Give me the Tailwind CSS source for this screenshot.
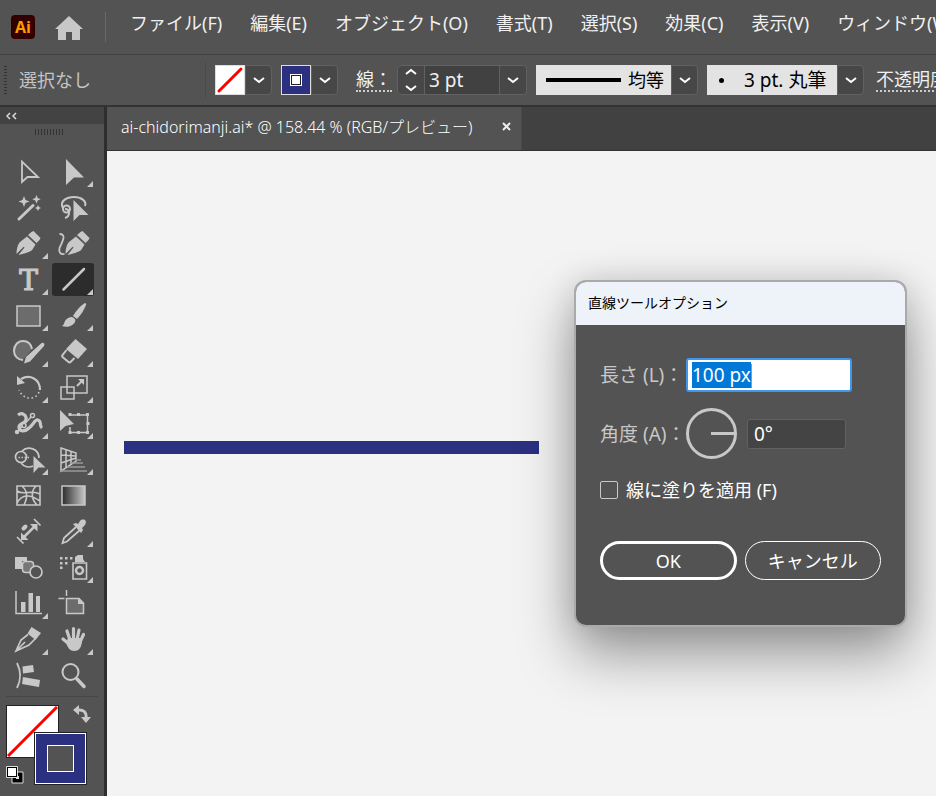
<!DOCTYPE html>
<html lang="ja">

<head>
    <meta charset="UTF-8">
    <meta name="viewport" content="width=device-width, initial-scale=1.0">
    <title>ai-chidorimanji.ai</title>
    <script src="https://cdn.jsdelivr.net/npm/@tailwindcss/browser@4"></script>
</head>

<body class="flex h-screen flex-col overflow-hidden bg-white pb-[3px] font-['Noto_Sans','Noto_Sans_CJK_JP',sans-serif] text-[18px] leading-6 text-[#f0f0f0]">

    <!-- Menu bar -->
    <header class="flex h-[55px] shrink-0 items-center overflow-hidden border-b border-[#404040] bg-[#535353] pl-[11px] whitespace-nowrap">
        <div class="flex h-6 w-6 shrink-0 items-center justify-center rounded bg-[#330000] font-['Open_Sans',sans-serif] text-[16px] font-bold text-[#ff9a00]">Ai</div>
        <button class="ml-5 shrink-0" aria-label="ホーム">
            <svg class="h-7 w-7 fill-[#c8c8c8]" viewBox="0 0 28 28">
                <path d="M14 3 28 16h-3v11h-8v-8h-6v8H3V16H0z" />
            </svg>
        </button>
        <div class="ml-[22px] h-[30px] w-px shrink-0 bg-[#6a6a6a]"></div>
        <nav class="ml-6 flex gap-7 pb-2">
            <a href="#">ファイル(F)</a>
            <a href="#">編集(E)</a>
            <a href="#">オブジェクト(O)</a>
            <a href="#">書式(T)</a>
            <a href="#">選択(S)</a>
            <a href="#">効果(C)</a>
            <a href="#">表示(V)</a>
            <a href="#">ウィンドウ(W)</a>
        </nav>
    </header>

    <!-- Control bar -->
    <section class="flex h-[52px] shrink-0 items-center overflow-hidden border-b-2 border-[#333] bg-[#535353] pl-1 whitespace-nowrap">
        <div class="h-7 w-[3px] shrink-0 bg-[repeating-linear-gradient(#333_0_1px,transparent_1px_3px)]"></div>
        <div class="ml-3 w-[186px] shrink-0 text-[#c4c4c4]">選択なし</div>
        <div class="h-9 w-px shrink-0 bg-[#4a4a4a]"></div>

        <div class="ml-[9px] flex h-[30px] shrink-0">
            <button class="w-[30px] border border-[#ddd] bg-white" aria-label="塗り">
                <svg class="h-7 w-7" viewBox="0 0 28 28">
                    <path d="M3 25 25 3" stroke="#f00" stroke-width="3" stroke-linecap="round" />
                </svg>
            </button>
            <button class="flex w-[27px] items-center justify-center rounded-r-sm border border-[#616161] bg-[#474747]" aria-label="塗りを選ぶ">
                <svg class="h-[7px] w-3" viewBox="0 0 12 7" fill="none" stroke="#fff" stroke-width="2"><path d="m1 1 5 4 5-4" /></svg>
            </button>
        </div>

        <div class="ml-[9px] flex h-[30px] shrink-0">
            <button class="flex w-[30px] items-center justify-center border border-[#ddd] bg-[#2b3080]" aria-label="線の色">
                <span class="flex h-3 w-3 items-center justify-center border border-white bg-[#222]"><span class="h-2 w-2 bg-white"></span></span>
            </button>
            <button class="flex w-[27px] items-center justify-center rounded-r-sm border border-[#616161] bg-[#474747]" aria-label="線の色を選ぶ">
                <svg class="h-[7px] w-3" viewBox="0 0 12 7" fill="none" stroke="#fff" stroke-width="2"><path d="m1 1 5 4 5-4" /></svg>
            </button>
        </div>

        <label for="stroke-width" class="ml-[18px] w-9 shrink-0 border-b-2 border-dotted border-[#ccc] leading-[22px]">線：</label>
        <div class="ml-[5px] flex h-[30px] shrink-0 rounded-sm border border-[#616161] bg-[#474747]">
            <button class="flex w-[27px] items-center justify-center border-r border-[#616161]" aria-label="増減">
                <svg class="h-6 w-3" viewBox="0 0 12 24" fill="none" stroke="#fff" stroke-width="2"><path d="m1 6 5-4 5 4M1 18l5 4 5-4" /></svg>
            </button>
            <input id="stroke-width" type="text" value="3 pt" class="w-[74px] bg-[#414141] pl-1 text-[19px]">
            <button class="flex w-[27px] items-center justify-center border-l border-[#616161]" aria-label="線幅を選ぶ">
                <svg class="h-[7px] w-3" viewBox="0 0 12 7" fill="none" stroke="#fff" stroke-width="2"><path d="m1 1 5 4 5-4" /></svg>
            </button>
        </div>

        <div class="ml-[9px] flex h-[30px] shrink-0">
            <div class="flex w-[135px] items-center bg-[#e3e3e3] pl-[10px] text-black">
                <div class="mr-[7px] h-1 w-[75px] bg-black"></div>
                <select class="w-9 appearance-none" aria-label="可変線幅プロファイル">
                    <option>均等</option>
                </select>
            </div>
            <button class="flex w-[27px] items-center justify-center rounded-r-sm border border-[#616161] bg-[#474747]" aria-label="プロファイルを選ぶ">
                <svg class="h-[7px] w-3" viewBox="0 0 12 7" fill="none" stroke="#fff" stroke-width="2"><path d="m1 1 5 4 5-4" /></svg>
            </button>
        </div>

        <div class="ml-[9px] flex h-[30px] shrink-0">
            <div class="flex w-[130px] items-center bg-[#e3e3e3] pl-3 text-black">
                <div class="mr-5 h-[5px] w-[5px] shrink-0 rounded-full bg-black"></div>
                <select class="w-[90px] appearance-none text-[19px]" aria-label="ブラシ定義">
                    <option>3 pt. 丸筆</option>
                </select>
            </div>
            <button class="flex w-[27px] items-center justify-center rounded-r-sm border border-[#616161] bg-[#474747]" aria-label="ブラシを選ぶ">
                <svg class="h-[7px] w-3" viewBox="0 0 12 7" fill="none" stroke="#fff" stroke-width="2"><path d="m1 1 5 4 5-4" /></svg>
            </button>
        </div>

        <a href="#" class="ml-3 shrink-0 border-b-2 border-dotted border-[#ccc] leading-[22px]">不透明度：</a>
    </section>

    <div class="flex min-h-0 flex-1">
        <!-- Tool panel -->
        <aside class="w-[107px] shrink-0 overflow-hidden border-r-[3px] border-[#2e2e2e] bg-[#535353]">
            <div class="flex h-[17px] items-center bg-[#434343] pl-[6px]">
                <button aria-label="パネルを折りたたむ">
                    <svg class="h-2 w-3" viewBox="0 0 12 8" fill="none" stroke="#ddd" stroke-width="1.5"><path d="M4 1 1 4l3 3M10 1 7 4l3 3" /></svg>
                </button>
            </div>
            <div class="mt-[5px] ml-[35px] h-[6px] w-[29px] bg-[repeating-linear-gradient(90deg,#333_0_1px,transparent_1px_3px)]"></div>

            <div class="mt-5 ml-[7px] grid w-[87px] grid-cols-2 gap-[3px] text-[#c8c8c8] [&_button]:h-[33px] [&_button]:w-[42px] [&_button]:rounded-[3px] [&_svg]:h-[33px] [&_svg]:w-[42px] [&_svg]:fill-current">
                <button aria-label="選択"><svg viewBox="0 0 42 33">
                    <path d="M15 6.500v20.500l5.500-5H31z" fill="none" stroke="currentColor" stroke-width="1.800" />
                </svg></button>
                <button aria-label="ダイレクト選択"><svg viewBox="0 0 42 33">
                    <path d="M14 4v26l8-7.500h10z" />
                    <path d="M41 26v6h-6z" />
                </svg></button>

                <button aria-label="自動選択"><svg viewBox="0 0 42 33">
                    <path d="M12 28 26 14.500" stroke="currentColor" stroke-width="3" stroke-linecap="round" />
                    <path d="m17 5 1.500 4 4 1.500-4 1.500-1.500 4-1.500-4-4-1.500 4-1.500zM29.500 4l1.200 3 3 1.200-3 1.200-1.200 3-1.200-3-3-1.200 3-1.200zM31 14l1 2 2 1-2 1-1 2-1-2-2-1 2-1z" />
                </svg></button>
                <button aria-label="なげなわ"><svg viewBox="0 0 42 33">
                    <g fill="none" stroke="currentColor" stroke-width="2">
                        <path d="M11 17C7 10 15 6 22 6s13 4 11 9" />
                        <circle cx="14.500" cy="18" r="3.500" />
                        <path d="M13 18c3 0 4 1 4 4s-1 4-4 5" />
                    </g>
                    <path d="M21.500 9v21l6-6h9z" />
                </svg></button>

                <button aria-label="ペン"><svg viewBox="0 0 42 33">
                    <path d="m24.500 5 2-1 7 7-1 2-3 3-8.500-8zM20 9.500l8.500 8-3 5c-1 2-8 4-14 5.500l6-7.500-.800-.800L9.500 27c0-5 1.500-10 3.500-12z" />
                    <path d="M41 26v6h-6z" />
                </svg></button>
                <button aria-label="曲線"><svg viewBox="0 0 42 33">
                    <path d="m28.500 5 2-1 7 7-1 2-3 3-8.500-8zM24 9.500l8.500 8-3 5c-1 2-8 4-14 5.500l6-7.500-.800-.800-7.200 7.300c0-5 1.500-10 3.500-12z" />
                    <path d="M7.500 7c8 0 2 9 0 14-1 4 1 7 5 6" fill="none" stroke="currentColor" stroke-width="1.800" />
                </svg></button>

                <button aria-label="文字"><svg viewBox="0 0 42 33">
                    <text x="21.500" y="27" text-anchor="middle" font-family="DejaVu Serif, serif" font-size="28" stroke="currentColor" stroke-width="1.200">T</text>
                    <path d="M41 26v6h-6z" />
                </svg></button>
                <button class="bg-[#2c2c2c]" aria-label="直線"><svg viewBox="0 0 42 33">
                    <path d="M11.500 26.500 32 6" stroke="currentColor" stroke-width="2.500" stroke-linecap="round" />
                    <path d="M41 26v6h-6z" />
                </svg></button>

                <button aria-label="長方形"><svg viewBox="0 0 42 33">
                    <path d="M10 7h23v20H10z" fill="#6c6c6c" stroke="currentColor" stroke-width="1.500" />
                    <path d="M41 26v6h-6z" />
                </svg></button>
                <button aria-label="ブラシ"><svg viewBox="0 0 42 33">
                    <path d="M33 4c1 0 1.500 1 1 2-2 5-5 10-9 14l-4-3c3-5 7-10 12-13zM20 18c3 1 4 3 3 5-2 4-8 6-13 4 2-1 2-3 3-5s4-4 7-4z" />
                    <path d="M41 26v6h-6z" />
                </svg></button>

                <button aria-label="Shaper"><svg viewBox="0 0 42 33">
                    <path d="M16 25c-5 0-9-4-9-9 0-6 4-10 9-10s8 3 9 8" fill="#6c6c6c" stroke="currentColor" stroke-width="2" />
                    <path d="m17 28.500 2-6.500L34 8.500c2-2 4.500.500 3 2.500L23 26.500z" />
                    <path d="M41 26v6h-6z" />
                </svg></button>
                <button aria-label="消しゴム"><svg viewBox="0 0 42 33">
                    <path d="M23.500 4 35 14l-9 10-12-10z" />
                    <path d="m14.500 15-4 5q-1 1 0 2l6 5q1 1 2 0l4-4" fill="none" stroke="currentColor" stroke-width="2" />
                    <path d="M41 26v6h-6z" />
                </svg></button>

                <button aria-label="回転"><svg viewBox="0 0 42 33">
                    <path d="M14 8c9-5 19 0 19 11" fill="none" stroke="currentColor" stroke-width="2.200" />
                    <path d="M32 21c-3 8-15 9-20-2" fill="none" stroke="currentColor" stroke-width="1.600" stroke-dasharray="1.600 2.600" />
                    <path d="M10 5v9l8-2z" />
                    <path d="M41 26v6h-6z" />
                </svg></button>
                <button aria-label="拡大・縮小"><svg viewBox="0 0 42 33">
                    <path d="M15 5h20v17H15zM9 16h13v12H9z" fill="none" stroke="currentColor" stroke-width="1.500" />
                    <path d="m25 15 5-5" stroke="currentColor" stroke-width="2" />
                    <path d="M26 8h6v6z" />
                    <path d="M41 26v6h-6z" />
                </svg></button>

                <button aria-label="線幅"><svg viewBox="0 0 42 33">
                    <path d="M11 8c4-3 9 0 8 5-1 4-7 3-7 7 0 5 6 5 10 1 5-4 6-9 9-8 4 1 1 6 4 8" fill="none" stroke="currentColor" stroke-width="3.200" />
                    <path d="M10 25 25 9" stroke="currentColor" stroke-width="1.500" />
                    <circle cx="10" cy="25" r="2.200" />
                    <circle cx="25.500" cy="8.500" r="2" fill="#535353" stroke="currentColor" stroke-width="1.500" />
                    <circle cx="17" cy="18.500" r="2" fill="#535353" stroke="currentColor" stroke-width="1.500" />
                    <path d="M41 26v6h-6z" />
                </svg></button>
                <button aria-label="自由変形"><svg viewBox="0 0 42 33">
                    <path d="M17 8h18.500v17.500H18V20" fill="none" stroke="currentColor" stroke-width="1.500" />
                    <path d="M8 3v21l5.500-5 8.500-2zM34 6h3v3h-3zM34 24h3v3h-3zM16.500 24h3v3h-3zM25 6h3v3h-3zM25 24h3v3h-3zM34.500 15h3v3h-3zM16.500 6h3v3h-3z" />
                    <path d="M41 26v6h-6z" />
                </svg></button>

                <button aria-label="シェイプ形成"><svg viewBox="0 0 42 33">
                    <g fill="none" stroke="currentColor" stroke-width="1.700">
                        <circle cx="14" cy="14" r="5.500" />
                        <path d="M15 8c6-6 17-2 17 7M14 20c3 4 8 5 12 3" />
                        <path d="M11.500 14.500h12" stroke-dasharray="1.500 1.500" />
                    </g>
                    <path d="M26.500 13v17l5-5.500h7z" />
                    <path d="M41 26v6h-6z" />
                </svg></button>
                <button aria-label="遠近グリッド"><svg viewBox="0 0 42 33">
                    <path d="m9 5 15 5v8L9 28zM14 7v18M19 8v13M9 12l15 1M9 20l15-5" fill="none" stroke="currentColor" stroke-width="1.500" />
                    <path d="M23 17h6M19 20h12M15 24h18M9 28h26" stroke="#999" stroke-width="1.300" />
                    <path d="M41 26v6h-6z" />
                </svg></button>

                <button aria-label="メッシュ"><svg viewBox="0 0 42 33">
                    <path d="M10 7h23v19H10zM15 7c7 6 5 13 2 19M29 7c-6 6-4 14 1 19M10 12c7 5 14-2 23 3M10 24c5-9 13-9 23-2" fill="none" stroke="currentColor" stroke-width="1.600" />
                </svg></button>
                <button aria-label="グラデーション"><svg viewBox="0 0 42 33">
                    <defs>
                        <linearGradient id="grad">
                            <stop offset="0" stop-color="#2a2a2a" />
                            <stop offset="1" stop-color="#c8c8c8" />
                        </linearGradient>
                    </defs>
                    <path d="M10 7h23v19H10z" fill="url(#grad)" stroke="currentColor" stroke-width="1.500" />
                </svg></button>

                <button aria-label="寸法"><svg viewBox="0 0 42 33">
                    <path d="m10 22 6.500 6.500M27 4l6.500 6.500" stroke="currentColor" stroke-width="1.700" />
                    <path d="m16 23 12-12" stroke="currentColor" stroke-width="2.500" />
                    <path d="M14 17.500V25h7.500zM23 9h7.500v7.500z" />
                    <path d="m16.500 13.500 2-2" stroke="currentColor" stroke-width="4" stroke-linecap="round" />
                </svg></button>
                <button aria-label="スポイト"><svg viewBox="0 0 42 33">
                    <path d="M24 12 12 23l-1.500 5L15 26.500 28 15" fill="none" stroke="currentColor" stroke-width="1.800" />
                    <path d="m21 9 3-1 2 1 2-3c3-3 8-1 5 4l-3 3 1 2-2 3z" />
                    <path d="M41 26v6h-6z" />
                </svg></button>

                <button aria-label="ブレンド"><svg viewBox="0 0 42 33">
                    <path d="M8 6h12v4h-5v8H8z" />
                    <rect x="15.500" y="10.500" width="11" height="11" rx="3" fill="#777" stroke="currentColor" stroke-width="1.500" />
                    <circle cx="29" cy="21" r="6" fill="#535353" stroke="currentColor" stroke-width="1.700" />
                </svg></button>
                <button aria-label="シンボルスプレー"><svg viewBox="0 0 42 33">
                    <path d="M21 12h13.500v16H21z" fill="none" stroke="currentColor" stroke-width="1.600" />
                    <circle cx="27.500" cy="19.500" r="3.500" fill="none" stroke="currentColor" stroke-width="2.500" />
                    <path d="M26 4h5v4l2 3H23V6zM8 6h2.500v2.500H8zM13 6h2.500v2.500H13zM18 6h2.500v2.500H18zM8 11h2.500v2.500H8zM13 11h2.500v2.500H13zM8 15.500h2.500V18H8z" />
                    <path d="M41 26v6h-6z" />
                </svg></button>

                <button aria-label="棒グラフ"><svg viewBox="0 0 42 33">
                    <path d="M9 4v22.500h26" fill="none" stroke="currentColor" stroke-width="1.500" />
                    <path d="M14 15h4.500v10H14zM21.500 6H26v19h-4.500zM29 9h4v16h-4z" />
                    <path d="M41 26v6h-6z" />
                </svg></button>
                <button aria-label="アートボード"><svg viewBox="0 0 42 33">
                    <path d="M14.500 11.500H27l4.500 4.500v10.500h-17z" fill="#6c6c6c" stroke="currentColor" stroke-width="1.500" />
                    <path d="M26 11v6h6z" />
                    <path d="M6.500 11.500h6M14.500 3v6" stroke="currentColor" stroke-width="1.500" />
                </svg></button>

                <button aria-label="スライス"><svg viewBox="0 0 42 33">
                    <path d="M21 11.500 14 17 9 28l13-6 6-6M9 28l9-9" fill="none" stroke="currentColor" stroke-width="1.700" />
                    <path d="m24.500 4 9.500 6-5.500 7-8-6.500z" />
                    <path d="M41 26v6h-6z" />
                </svg></button>
                <button aria-label="手のひら"><svg viewBox="0 0 42 33">
                    <g fill="none" stroke="currentColor" stroke-width="3.200" stroke-linecap="round">
                        <path d="m18 17-3-9M21.500 16V5.500M25 17l2-10M28 19l3.500-7.500M17 21l-6-5" />
                    </g>
                    <path d="M16 15h12l2 4c-1 6-3 9-8 9-4 0-6-3-8-8z" />
                    <path d="M41 26v6h-6z" />
                </svg></button>

                <button aria-label="リピート"><svg viewBox="0 0 42 33">
                    <path d="M10 4c4 8 4 17 0 25" fill="none" stroke="currentColor" stroke-width="1.800" />
                    <path d="m15.500 7.500 10.500-1.500 1 7-11 1.500zM16 18l17 3-1 7-17-3z" />
                </svg></button>
                <button aria-label="ズーム"><svg viewBox="0 0 42 33">
                    <circle cx="18.500" cy="13" r="8" fill="none" stroke="currentColor" stroke-width="2" />
                    <path d="m25 20 7 7.500" stroke="currentColor" stroke-width="3.500" stroke-linecap="round" />
                </svg></button>
            </div>

            <!-- Fill and stroke swatches -->
            <div class="relative mx-[6px] mt-1 h-24 border-t border-[#474747]">
                <button class="absolute top-2 left-0 h-[53px] w-[53px] border border-[#222] bg-white" aria-label="塗り">
                    <svg class="h-full w-full" viewBox="0 0 51 51"><path d="M1 50 50 1" stroke="#f00" stroke-width="3" /></svg>
                </button>
                <button class="absolute top-9 left-[29px] flex h-[51px] w-[51px] items-center justify-center border border-white bg-[#2b3080] outline outline-[#222]" aria-label="線">
                    <span class="h-[27px] w-[27px] border border-white bg-[#535353]"></span>
                </button>
                <button class="absolute top-2 left-[67px]" aria-label="塗りと線を入れ替え">
                    <svg class="h-[18px] w-[18px]" viewBox="0 0 18 18">
                        <path d="M4 5q10-1 9 8" fill="none" stroke="#c8c8c8" stroke-width="3" />
                        <path d="M6 0v10L0 5zM8 12h10l-5 6z" fill="#c8c8c8" />
                    </svg>
                </button>
                <button class="absolute top-[69px] left-0" aria-label="初期設定の塗りと線">
                    <svg class="h-[18px] w-[18px]" viewBox="0 0 18 18">
                        <path d="M6 6h11v11H6z" stroke="#ddd" />
                        <path d="M10 10h3v3h-3z" fill="#ddd" />
                        <path d="M.5.500h11v11H.5z" stroke="#ddd" />
                        <path d="M2 2h8v8H2z" fill="#fff" />
                    </svg>
                </button>
            </div>
        </aside>

        <main class="flex min-w-0 flex-1 flex-col">
            <!-- Document tab -->
            <div class="flex h-11 shrink-0 border-b border-[#333] bg-[#414141]">
                <div class="flex w-[415px] items-center border-r border-[#4a4a4a] bg-[#535353] pb-1 pl-[14px] text-[16px] font-light whitespace-nowrap text-white">
                    <span class="flex-1">ai-chidorimanji.ai* @ 158.44 % (RGB/プレビュー)</span>
                    <button class="mr-[10px]" aria-label="閉じる">
                        <svg class="h-[9px] w-[9px]" viewBox="0 0 9 9" stroke="#eee" stroke-width="2"><path d="m1 1 7 7M8 1 1 8" /></svg>
                    </button>
                </div>
            </div>

            <!-- Canvas -->
            <div class="relative min-h-0 flex-1 overflow-hidden bg-[#f3f3f3]">
                <div class="absolute top-[290px] left-[17px] h-[13px] w-[415px] bg-[#2b3080]"></div>

                <form role="dialog" aria-labelledby="dialog-title" class="absolute top-[129px] right-[29px] w-[333px] overflow-hidden rounded-[12px] border-2 border-[#aaa] bg-[#535353] text-[#c8c8c8] shadow-[0_28px_56px_rgba(0,0,0,0.38),0_0_32px_rgba(0,0,0,0.12)]">
                    <h1 id="dialog-title" class="h-[43px] bg-[#eef3fa] pl-3 font-['Noto_Sans_CJK_JP',sans-serif] text-[14px] leading-[40px] text-black">直線ツールオプション</h1>
                    <div class="px-6 pt-[33px] pb-[45px]">
                        <div class="flex items-center">
                            <label for="length" class="w-[86px] text-[19px] whitespace-nowrap">長さ (L)：</label>
                            <div class="relative">
                                <input id="length" type="text" value="100 px" class="h-[34px] w-[166px] rounded-[3px] border-2 border-[#3f96ea] bg-white pl-1 text-[19px] text-black outline-none selection:bg-[#0078d7] selection:text-white">
                                <span class="absolute top-[6px] left-[65px] h-6 w-px bg-[#f08020]"></span>
                            </div>
                        </div>
                        <div class="mt-4 flex items-center">
                            <label for="angle" class="w-[86px] text-[19px] whitespace-nowrap">角度 (A)：</label>
                            <svg class="h-[51px] w-[51px]" viewBox="0 0 51 51" fill="none" stroke="#c8c8c8" stroke-width="3">
                                <circle cx="25.500" cy="25.500" r="24" />
                                <path d="M25 25.500h24" />
                            </svg>
                            <input id="angle" type="text" value="0°" class="ml-[10px] h-[30px] w-[99px] rounded-[3px] border border-[#616161] bg-[#444] pl-[6px] text-[19px] text-white">
                        </div>
                        <label class="mt-[17px] flex h-7 items-center gap-2 text-white">
                            <input type="checkbox" class="h-[18px] w-[18px] appearance-none rounded-[2px] border border-[#c8c8c8]">
                            線に塗りを適用 (F)
                        </label>
                        <div class="mt-[37px] flex gap-2 text-white">
                            <button type="button" class="h-[39px] w-[138px] rounded-full border-3 border-white">OK</button>
                            <button type="button" class="h-[39px] w-[138px] rounded-full border border-white">キャンセル</button>
                        </div>
                    </div>
                </form>
            </div>
        </main>
    </div>

    <script>
        window.onload = function () {
            const campo = document.getElementById('length');
            campo.focus();
            campo.select();
        }
    </script>
</body>

</html>
